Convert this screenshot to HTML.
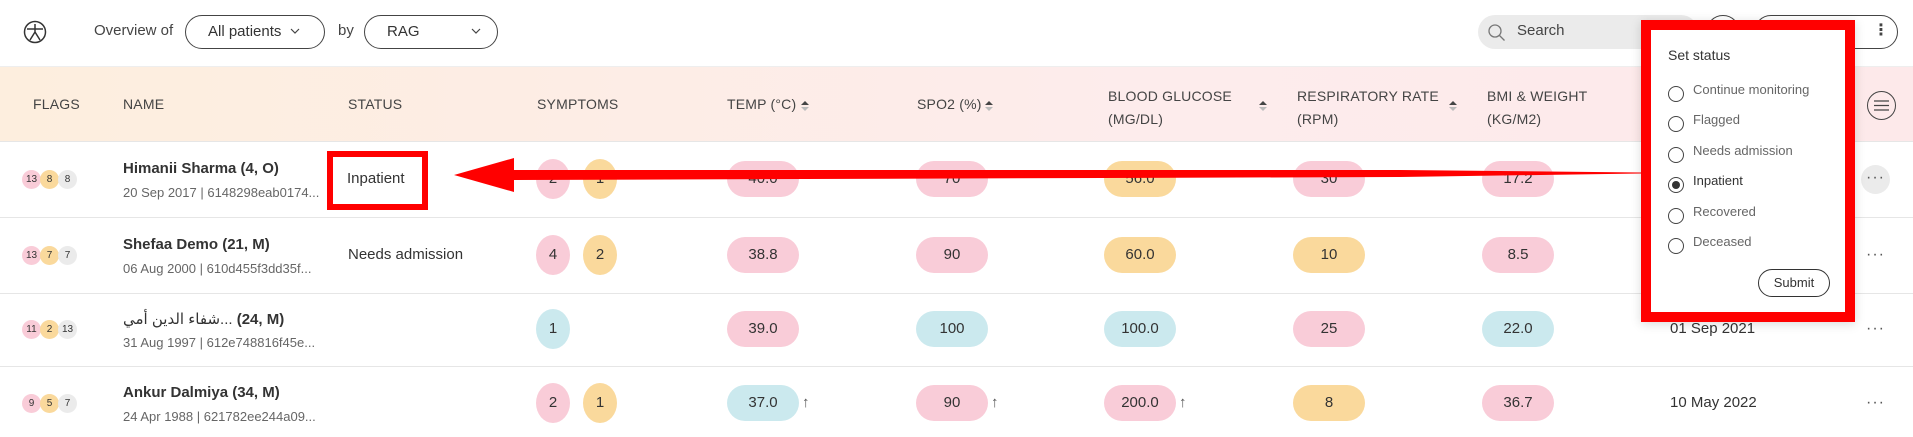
<!DOCTYPE html>
<html><head><meta charset="utf-8"><style>
*{margin:0;padding:0;box-sizing:border-box}
body{width:1913px;height:437px;overflow:hidden;background:#fff;font-family:"Liberation Sans","DejaVu Sans",sans-serif;color:#333;position:relative}
.a{position:absolute;white-space:nowrap}
.hd{font-size:14px;color:#444;letter-spacing:.2px}
.pill{position:absolute;width:72px;height:36px;border-radius:18px;font-size:15px;text-align:center;line-height:36px;color:#333}
.pk{background:#f9ccd8}.or{background:#fad99c}.bl{background:#cbe9ee}.gr{background:#ebebeb}
.sym{position:absolute;width:34px;height:40px;border-radius:50%;font-size:15px;text-align:center;line-height:40px}
.fl{position:absolute;width:19px;height:19px;border-radius:50%;font-size:10px;text-align:center;line-height:19px}
.nm{font-size:15px;font-weight:bold;color:#333}
.sb{font-size:13px;color:#666}
.line{position:absolute;left:0;width:1913px;height:1px;background:#e6e6e6}
.sort{position:absolute;width:0;height:0;border-left:4px solid transparent;border-right:4px solid transparent}
.radio{position:absolute;left:1668px;width:16px;height:16px;border:1.3px solid #444;border-radius:50%}
.opt{position:absolute;left:1693px;font-size:13px;color:#666}
.dots{position:absolute;font-size:16px;color:#555;letter-spacing:1px}
</style></head><body>
<svg class="a" style="left:23px;top:20px" width="24" height="24" viewBox="0 0 24 24" fill="none" stroke="#333" stroke-width="1.5"><circle cx="12" cy="12" r="10.5"/><path d="M4 9h16M12 4v8M12 12l-5 8M12 12l5 8"/></svg>
<div class="a" style="left:94px;top:22px;font-size:15px;color:#444">Overview of</div>
<div class="a" style="left:185px;top:15px;width:140px;height:34px;border:1.3px solid #444;border-radius:17px;font-size:15px;line-height:32px;padding-left:22px;color:#333">All patients</div>
<svg class="a" style="left:290px;top:28px" width="10" height="7" fill="none" stroke="#444" stroke-width="1.2"><path d="M1 1l4 4 4-4"/></svg>
<div class="a" style="left:338px;top:22px;font-size:15px;color:#444">by</div>
<div class="a" style="left:364px;top:15px;width:134px;height:34px;border:1.3px solid #444;border-radius:17px;font-size:15px;line-height:32px;padding-left:22px;color:#333">RAG</div>
<svg class="a" style="left:471px;top:28px" width="10" height="7" fill="none" stroke="#444" stroke-width="1.2"><path d="M1 1l4 4 4-4"/></svg>
<div class="a" style="left:1478px;top:15px;width:220px;height:34px;border-radius:17px;background:#ebebeb"></div>
<svg class="a" style="left:1487px;top:23px" width="20" height="20" viewBox="0 0 20 20" fill="none" stroke="#777" stroke-width="1.3"><circle cx="8" cy="8" r="6"/><path d="M12.5 12.5l5 5"/></svg>
<div class="a" style="left:1517px;top:22px;font-size:15px;color:#444">Search</div>
<div class="a" style="left:1706px;top:15px;width:34px;height:34px;border:1.3px solid #444;border-radius:50%"></div>
<div class="a" style="left:1754px;top:15px;width:144px;height:34px;border:1.3px solid #444;border-radius:17px"></div>
<div class="a" style="left:1873px;top:20px;font-size:16px;font-weight:bold;color:#444">&#8942;</div>
<div class="a" style="left:0;top:66px;width:1913px;height:76px;background:linear-gradient(90deg,#fdeede,#fdecec 60%,#fde9ea);border-top:1px solid #eee;border-bottom:1px solid #e6e6e6"></div>
<div class="a hd" style="left:33px;top:96px">FLAGS</div>
<div class="a hd" style="left:123px;top:96px">NAME</div>
<div class="a hd" style="left:348px;top:96px">STATUS</div>
<div class="a hd" style="left:537px;top:96px">SYMPTOMS</div>
<div class="a hd" style="left:727px;top:96px">TEMP (°C)</div>
<div class="a hd" style="left:917px;top:96px">SPO2 (%)</div>
<div class="a hd" style="left:1108px;top:85px;line-height:23px">BLOOD GLUCOSE<br>(MG/DL)</div>
<div class="a hd" style="left:1297px;top:85px;line-height:23px">RESPIRATORY RATE<br>(RPM)</div>
<div class="a hd" style="left:1487px;top:85px;line-height:23px">BMI &amp; WEIGHT<br>(KG/M2)</div>
<div class="sort" style="left:801px;top:101px;border-bottom:4px solid #444"></div><div class="sort" style="left:801px;top:107px;border-top:4px solid #bbb"></div>
<div class="sort" style="left:985px;top:101px;border-bottom:4px solid #444"></div><div class="sort" style="left:985px;top:107px;border-top:4px solid #bbb"></div>
<div class="sort" style="left:1259px;top:101px;border-bottom:4px solid #444"></div><div class="sort" style="left:1259px;top:107px;border-top:4px solid #bbb"></div>
<div class="sort" style="left:1449px;top:101px;border-bottom:4px solid #444"></div><div class="sort" style="left:1449px;top:107px;border-top:4px solid #bbb"></div>
<div class="a" style="left:1867px;top:91px;width:29px;height:29px;border:1.3px solid #444;border-radius:50%"></div>
<svg class="a" style="left:1873px;top:98px" width="17" height="15" stroke="#444" stroke-width="1.2"><path d="M1 3h15M1 7.5h15M1 12h15"/></svg>
<div class="line" style="top:217px"></div><div class="line" style="top:293px"></div><div class="line" style="top:366px"></div>
<div class="fl pk" style="left:22px;top:170px">13</div><div class="fl or" style="left:40px;top:170px">8</div><div class="fl gr" style="left:58px;top:170px">8</div>
<div class="a nm" style="left:123px;top:160px">Himanii Sharma (4, O)</div>
<div class="a sb" style="left:123px;top:185px">20 Sep 2017 | 6148298eab0174...</div>
<div class="sym pk" style="left:536px;top:159px">2</div><div class="sym or" style="left:583px;top:159px">1</div>
<div class="pill pk" style="left:727px;top:161px">40.0</div>
<div class="pill pk" style="left:916px;top:161px">70</div>
<div class="pill or" style="left:1104px;top:161px">56.0</div>
<div class="pill pk" style="left:1293px;top:161px">30</div>
<div class="pill pk" style="left:1482px;top:161px">17.2</div>
<div class="a" style="left:1861px;top:165px;width:29px;height:29px;border-radius:50%;background:#ebebeb"></div>
<div class="dots" style="left:1866px;top:169px">···</div>
<div class="fl pk" style="left:22px;top:246px">13</div><div class="fl or" style="left:40px;top:246px">7</div><div class="fl gr" style="left:58px;top:246px">7</div>
<div class="a nm" style="left:123px;top:236px">Shefaa Demo (21, M)</div>
<div class="a sb" style="left:123px;top:261px">06 Aug 2000 | 610d455f3dd35f...</div>
<div class="a" style="left:348px;top:246px;font-size:15px;color:#333">Needs admission</div>
<div class="sym pk" style="left:536px;top:235px">4</div><div class="sym or" style="left:583px;top:235px">2</div>
<div class="pill pk" style="left:727px;top:237px">38.8</div>
<div class="pill pk" style="left:916px;top:237px">90</div>
<div class="pill or" style="left:1104px;top:237px">60.0</div>
<div class="pill or" style="left:1293px;top:237px">10</div>
<div class="pill pk" style="left:1482px;top:237px">8.5</div>
<div class="dots" style="left:1866px;top:246px">···</div>
<div class="fl pk" style="left:22px;top:320px">11</div><div class="fl or" style="left:40px;top:320px">2</div><div class="fl gr" style="left:58px;top:320px">13</div>
<div class="a nm" style="left:123px;top:310px"><span style="font-weight:normal">شفاء الدين أمي...</span> (24, M)</div>
<div class="a sb" style="left:123px;top:335px">31 Aug 1997 | 612e748816f45e...</div>
<div class="sym bl" style="left:536px;top:309px">1</div>
<div class="pill pk" style="left:727px;top:311px">39.0</div>
<div class="pill bl" style="left:916px;top:311px">100</div>
<div class="pill bl" style="left:1104px;top:311px">100.0</div>
<div class="pill pk" style="left:1293px;top:311px">25</div>
<div class="pill bl" style="left:1482px;top:311px">22.0</div>
<div class="a" style="left:1670px;top:320px;font-size:15px;color:#333">01 Sep 2021</div>
<div class="dots" style="left:1866px;top:320px">···</div>
<div class="fl pk" style="left:22px;top:394px">9</div><div class="fl or" style="left:40px;top:394px">5</div><div class="fl gr" style="left:58px;top:394px">7</div>
<div class="a nm" style="left:123px;top:384px">Ankur Dalmiya (34, M)</div>
<div class="a sb" style="left:123px;top:409px">24 Apr 1988 | 621782ee244a09...</div>
<div class="sym pk" style="left:536px;top:383px">2</div><div class="sym or" style="left:583px;top:383px">1</div>
<div class="pill bl" style="left:727px;top:385px">37.0</div><div class="a" style="left:802px;top:394px;font-size:15px;color:#555">↑</div>
<div class="pill pk" style="left:916px;top:385px">90</div><div class="a" style="left:991px;top:394px;font-size:15px;color:#555">↑</div>
<div class="pill pk" style="left:1104px;top:385px">200.0</div><div class="a" style="left:1179px;top:394px;font-size:15px;color:#555">↑</div>
<div class="pill or" style="left:1293px;top:385px">8</div>
<div class="pill pk" style="left:1482px;top:385px">36.7</div>
<div class="a" style="left:1670px;top:394px;font-size:15px;color:#333">10 May 2022</div>
<div class="dots" style="left:1866px;top:394px">···</div>
<div class="a" style="left:327px;top:151px;width:101px;height:59px;border:6px solid #f00;background:#fff"></div>
<div class="a" style="left:347px;top:170px;font-size:15px;color:#333">Inpatient</div>
<svg class="a" style="left:0;top:0" width="1913" height="437"><polygon points="454,175 514,158 514,170 1400,170 1641,172.5 1641,173.5 1400,177 514,180 514,192" fill="#f00"/></svg>
<div class="a" style="left:1641px;top:20px;width:214px;height:302px;border:10px solid #f00;background:#fff;box-shadow:0 2px 10px rgba(0,0,0,.15)"></div>
<div class="a" style="left:1668px;top:47px;font-size:14px;color:#333">Set status</div>
<div class="radio" style="top:86px"></div><div class="opt" style="top:82px">Continue monitoring</div>
<div class="radio" style="top:116px"></div><div class="opt" style="top:112px">Flagged</div>
<div class="radio" style="top:147px"></div><div class="opt" style="top:143px">Needs admission</div>
<div class="radio" style="top:177px"><div style="position:absolute;left:3px;top:3px;width:8px;height:8px;border-radius:50%;background:#333"></div></div><div class="opt" style="top:173px;color:#333">Inpatient</div>
<div class="radio" style="top:208px"></div><div class="opt" style="top:204px">Recovered</div>
<div class="radio" style="top:238px"></div><div class="opt" style="top:234px">Deceased</div>
<div class="a" style="left:1758px;top:269px;width:72px;height:28px;border:1.3px solid #333;border-radius:14px;font-size:13px;text-align:center;line-height:26px;color:#333">Submit</div>
</body></html>
